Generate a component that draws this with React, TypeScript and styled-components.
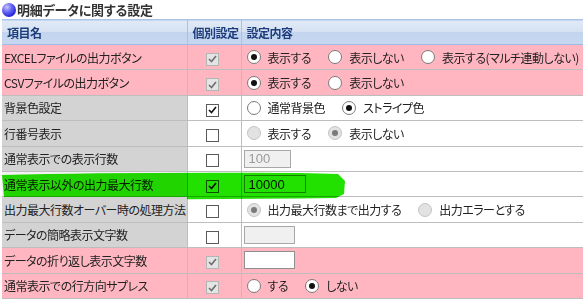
import * as React from 'react';
import styled, { createGlobalStyle, css } from 'styled-components';

const GlobalStyle = createGlobalStyle`
  html, body {
    margin: 0;
    padding: 0;
    background: #fff;
  }
  body {
    font-family: "Noto Sans CJK JP", "Noto Sans", sans-serif;
    font-size: 12px;
    color: #222;
    font-feature-settings: "palt";
  }
`;

const Page = styled.div`
  padding: 0 0 0 2px;
`;

const Title = styled.div`
  height: 19px;
  display: flex;
  align-items: center;
  gap: 1px;
  font-size: 13px;
  font-weight: bold;
  color: #333;
  letter-spacing: -0.2px;
`;

const Ball = styled.span`
  width: 14px;
  height: 14px;
  border-radius: 50%;
  background: radial-gradient(circle at 35% 30%, #c9c9ff 0%, #6a6af5 35%, #2222d8 75%, #1414a0 100%);
`;

const Table = styled.table`
  border-collapse: collapse;
  table-layout: fixed;
  width: 581px;
  letter-spacing: -0.5px;

  th, td {
    box-sizing: border-box;
  }
`;

const HeadRow = styled.tr`
  height: 25px;
  background: linear-gradient(#e0e9f6 0%, #d6e2f2 46%, #c3d5ee 50%, #c6d8f0 100%);
  border-top: 1px solid #a8c2e8;
  border-bottom: 1px solid #9dbbe6;
`;

const HeadCell = styled.th<{ $w?: number }>`
  width: ${p => (p.$w ? `${p.$w}px` : 'auto')};
  padding: 0 0 0 5px;
  text-align: left;
  font-size: 12px;
  font-weight: bold;
  color: #1d3c7c;
  border-left: 1px solid #a6c2ea;
  &:first-child {
    border-left: none;
  }
`;

const Row = styled.tr<{ $pink?: boolean }>`
  height: 25.4px;
  border-bottom: 1px solid #bdbdbd;
  background: ${p => (p.$pink ? '#ffb6c1' : '#fff')};
`;

const NameCell = styled.td<{ $tone: 'pink' | 'gray' | 'marked' }>`
  position: relative;
  padding: 0 0 0 2px;
  white-space: nowrap;
  overflow: visible;
  background: ${p => (p.$tone === 'pink' ? '#ffb6c1' : p.$tone === 'marked' ? '#f2f2f2' : '#d3d3d3')};
  border-right: 1px solid #bdbdbd;
`;

const FlagCell = styled.td`
  text-align: center;
  padding: 0 3px 0 0;
  border-right: 1px solid #bdbdbd;
`;

const ValueCell = styled.td`
  padding: 0 0 0 2px;
  white-space: nowrap;
  overflow: hidden;
`;

const Box = styled.span<{ $off?: boolean }>`
  display: inline-flex;
  vertical-align: middle;
  align-items: center;
  justify-content: center;
  box-sizing: border-box;
  width: 13px;
  height: 13px;
  border: 1px solid ${p => (p.$off ? '#b4b4b4' : '#5a5a5a')};
  background: ${p => (p.$off ? '#e4e4e4' : '#fff')};
`;

const Options = styled.div`
  display: flex;
  align-items: center;
  gap: 17px;
  margin-left: 3px;
`;

const Option = styled.label`
  display: inline-flex;
  align-items: center;
  gap: 7px;
`;

const Dot = styled.span<{ $on?: boolean; $off?: boolean }>`
  box-sizing: border-box;
  width: 14px;
  height: 14px;
  border-radius: 50%;
  display: inline-flex;
  align-items: center;
  justify-content: center;
  border: 1px solid ${p => (p.$off ? '#c4c4c4' : '#7a7a7a')};
  background: ${p => (p.$off ? '#e2e2e2' : '#fff')};
  ${p =>
    p.$on &&
    css`
      &::after {
        content: '';
        width: 6px;
        height: 6px;
        border-radius: 50%;
        background: ${p.$off ? '#7a7a7a' : '#111'};
      }
    `}
`;

const Field = styled.span<{ $w: number; $off?: boolean }>`
  display: flex;
  align-items: center;
  box-sizing: border-box;
  width: ${p => p.$w}px;
  height: 18px;
  padding: 0 4px;
  border: 1px solid ${p => (p.$off ? '#a8a8a8' : '#8f8f8f')};
  background: ${p => (p.$off ? '#f0f0f0' : '#fff')};
  color: ${p => (p.$off ? '#9a9a9a' : '#111')};
  font-family: "Liberation Sans", Arial, sans-serif;
  font-size: 13px;
  letter-spacing: 0;
`;

const Marker = styled.svg`
  position: absolute;
  left: -2px;
  top: 0;
  width: 350px;
  height: 28px;
  mix-blend-mode: multiply;
  pointer-events: none;
`;

const Check = ({ on, off }: { on?: boolean; off?: boolean }) => (
  <Box $off={off}>
    {on && (
      <svg width="9" height="8" viewBox="0 0 9 8">
        <path d="M1 4 L3.5 6.5 L8 1" fill="none" stroke={off ? '#6e6e6e' : '#111'} strokeWidth="1.6" />
      </svg>
    )}
  </Box>
);

type Opt = { label: string; on?: boolean; off?: boolean };

const Radios = ({ items }: { items: Opt[] }) => (
  <Options>
    {items.map(o => (
      <Option key={o.label}>
        <Dot $on={o.on} $off={o.off} />
        {o.label}
      </Option>
    ))}
  </Options>
);

type Item = {
  name: string;
  pink?: boolean;
  checked: boolean;
  value: React.ReactNode;
  marked?: boolean;
};

const items: Item[] = [
  {
    name: 'EXCELファイルの出力ボタン',
    pink: true,
    checked: true,
    value: (
      <Radios
        items={[
          { label: '表示する', on: true },
          { label: '表示しない' },
          { label: '表示する(マルチ連動しない)' },
        ]}
      />
    ),
  },
  {
    name: 'CSVファイルの出力ボタン',
    pink: true,
    checked: true,
    value: <Radios items={[{ label: '表示する', on: true }, { label: '表示しない' }]} />,
  },
  {
    name: '背景色設定',
    checked: true,
    value: <Radios items={[{ label: '通常背景色' }, { label: 'ストライプ色', on: true }]} />,
  },
  {
    name: '行番号表示',
    checked: false,
    value: <Radios items={[{ label: '表示する', off: true }, { label: '表示しない', on: true, off: true }]} />,
  },
  {
    name: '通常表示での表示行数',
    checked: false,
    value: <Field $w={47} $off>100</Field>,
  },
  {
    name: '通常表示以外の出力最大行数',
    checked: true,
    marked: true,
    value: <Field $w={62}>10000</Field>,
  },
  {
    name: '出力最大行数オーバー時の処理方法',
    checked: false,
    value: (
      <Radios items={[{ label: '出力最大行数まで出力する', on: true, off: true }, { label: '出力エラーとする', off: true }]} />
    ),
  },
  {
    name: 'データの簡略表示文字数',
    checked: false,
    value: <Field $w={51} $off />,
  },
  {
    name: 'データの折り返し表示文字数',
    pink: true,
    checked: true,
    value: <Field $w={51} />,
  },
  {
    name: '通常表示での行方向サプレス',
    pink: true,
    checked: true,
    value: <Radios items={[{ label: 'する' }, { label: 'しない', on: true }]} />,
  },
];

export default function App() {
  return (
    <Page>
      <GlobalStyle />
      <Title>
        <Ball />
        明細データに関する設定
      </Title>
      <Table>
        <thead>
          <HeadRow>
            <HeadCell $w={185}>項目名</HeadCell>
            <HeadCell $w={54}>個別設定</HeadCell>
            <HeadCell>設定内容</HeadCell>
          </HeadRow>
        </thead>
        <tbody>
          {items.map(it => (
            <Row key={it.name} $pink={it.pink}>
              <NameCell $tone={it.pink ? 'pink' : it.marked ? 'marked' : 'gray'}>
                {it.name}
                {it.marked && (
                  <Marker viewBox="0 0 350 28" preserveAspectRatio="none">
                    <path
                      d="M2 3 Q 120 0 300 1 L 338 2 L 342 6 L 345 9 L 344 22 L 336 26 Q 180 28 14 27 L 4 25 Z"
                      fill="#22e000"
                    />
                  </Marker>
                )}
              </NameCell>
              <FlagCell>
                <Check on={it.checked} off={it.pink} />
              </FlagCell>
              <ValueCell>{it.value}</ValueCell>
            </Row>
          ))}
        </tbody>
      </Table>
    </Page>
  );
}
